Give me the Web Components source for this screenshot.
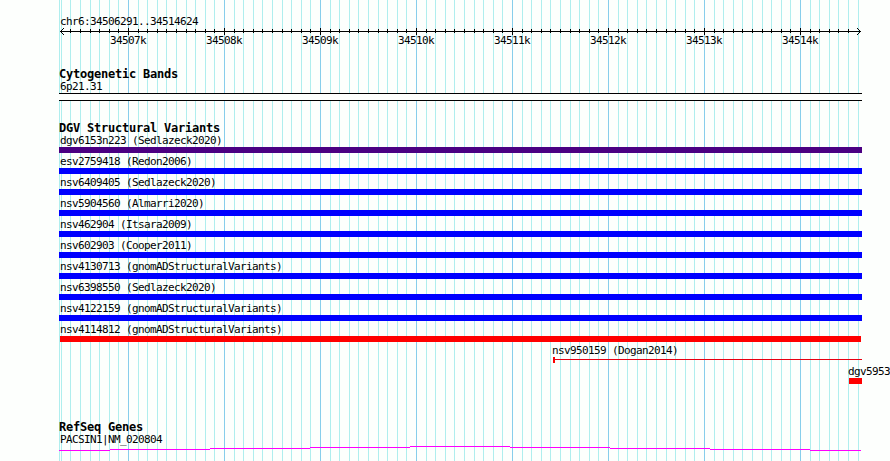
<!DOCTYPE html>
<html lang="en">
<head>
<meta charset="utf-8">
<title>chr6:34506291..34514624</title>
<style>
  html, body {
    margin: 0;
    height: 100%;
    overflow: hidden;
    background: #fdfffd;
  }
</style>
</head>
<body>
<genome-view>
  <genome-ruler region="chr6:34506291..34514624" first="34507" count="8"></genome-ruler>
  <genome-track titulo="Cytogenetic Bands">
    <track-feature label="6p21.31" kind="band"></track-feature>
  </genome-track>
  <genome-track titulo="DGV Structural Variants">
    <track-feature label="dgv6153n223 (Sedlazeck2020)" color="#4b0082"></track-feature>
    <track-feature label="esv2759418 (Redon2006)"></track-feature>
    <track-feature label="nsv6409405 (Sedlazeck2020)"></track-feature>
    <track-feature label="nsv5904560 (Almarri2020)"></track-feature>
    <track-feature label="nsv462904 (Itsara2009)"></track-feature>
    <track-feature label="nsv602903 (Cooper2011)"></track-feature>
    <track-feature label="nsv4130713 (gnomADStructuralVariants)"></track-feature>
    <track-feature label="nsv6398550 (Sedlazeck2020)"></track-feature>
    <track-feature label="nsv4122159 (gnomADStructuralVariants)"></track-feature>
    <track-feature label="nsv4114812 (gnomADStructuralVariants)" color="#ff0000" start="1" end="802"></track-feature>
    <track-feature label="nsv950159 (Dogan2014)" color="#ff0000" start="494" kind="span"></track-feature>
    <track-feature label="dgv5953" color="#ff0000" start="790"></track-feature>
  </genome-track>
  <genome-track titulo="RefSeq Genes" style="margin-top: 36px">
    <track-feature label="PACSIN1|NM_020804" kind="gene"></track-feature>
  </genome-track>
</genome-view>

<script>
const WIDTH = 803;

class GenomeView extends HTMLElement {
  constructor() {
    super();
    this.attachShadow({ mode: 'open' });
  }

  connectedCallback() {
    // 100 bp lines, with a darker one on every 1000 bp
    let lines = '<rect x="59" width="1" height="461" fill="#afeeee"/>';
    for (let i = -7; i <= 76; i++) {
      const x = Math.round(128 + i * 9.6);
      const color = i % 10 === 0 ? '#87ceeb' : '#afeeee';
      lines += `<rect x="${x}" width="1" height="461" fill="${color}"/>`;
    }

    this.shadowRoot.innerHTML = `
      <style>
        :host {
          display: grid;
          width: 890px;
          height: 461px;
          overflow: hidden;
          color: #000;
          font: 11px/13px "DejaVu Sans Mono", "Liberation Mono", monospace;
          letter-spacing: -0.622px;
        }
        svg, .tracks {
          grid-area: 1 / 1;
        }
        .tracks {
          min-width: 0;
          padding: 15px 0 0 59px;
        }
      </style>
      <svg width="890" height="461" shape-rendering="crispEdges">${lines}</svg>
      <div class="tracks"><slot></slot></div>
    `;
  }
}

class GenomeRuler extends HTMLElement {
  constructor() {
    super();
    this.attachShadow({ mode: 'open' });
  }

  connectedCallback() {
    const first = Number(this.getAttribute('first'));
    const count = Number(this.getAttribute('count'));

    let ticks = '';
    for (let i = -6; i <= 75; i++) {
      const x = Math.round(128 + i * 9.6) - 59;
      ticks += i % 10 === 0
        ? `<rect x="${x}" y="0" width="1" height="7"/>`
        : `<rect x="${x}" y="1" width="1" height="4"/>`;
    }

    let labels = '';
    for (let i = 0; i < count; i++) {
      labels += `<span>${first + i}k</span>`;
    }

    this.shadowRoot.innerHTML = `
      <style>
        :host {
          display: block;
        }
        .region {
          padding-left: 1px;
        }
        svg {
          display: block;
        }
        .labels {
          display: flex;
          gap: 60px;
          margin-top: -1px;
          padding-left: 51px;
        }
        span {
          flex: none;
          width: 36px;
          white-space: nowrap;
        }
      </style>
      <div class="region">${this.getAttribute('region')}</div>
      <svg width="${WIDTH}" height="7" shape-rendering="crispEdges">
        <rect x="1" y="3" width="801" height="1"/>
        ${ticks}
        <path d="M2 2h1v1h-1zM3 1h1v1h-1zM4 0h1v1h-1zM2 4h1v1h-1zM3 5h1v1h-1zM4 6h1v1h-1z"/>
        <path d="M800 2h1v1h-1zM799 1h1v1h-1zM798 0h1v1h-1zM800 4h1v1h-1zM799 5h1v1h-1zM798 6h1v1h-1z"/>
      </svg>
      <div class="labels">${labels}</div>
    `;
  }
}

class GenomeTrack extends HTMLElement {
  constructor() {
    super();
    this.attachShadow({ mode: 'open' });
  }

  connectedCallback() {
    this.shadowRoot.innerHTML = `
      <style>
        :host {
          display: block;
          margin-top: 20px;
        }
        .title {
          height: 13px;
          font-size: 12px;
          font-weight: 700;
          line-height: 14px;
          letter-spacing: -0.224px;
        }
        .features {
          display: flex;
          flex-direction: column;
          gap: 2px;
        }
      </style>
      <div class="title">${this.getAttribute('titulo')}</div>
      <div class="features"><slot></slot></div>
    `;
  }
}

class TrackFeature extends HTMLElement {
  constructor() {
    super();
    this.attachShadow({ mode: 'open' });
  }

  glyph(kind, width, color) {
    if (kind === 'band') {
      return `<svg width="${width}" height="8" shape-rendering="crispEdges">
        <rect width="${width}" height="8"/>
        <rect y="1" width="${width}" height="6" fill="#fdfffd"/>
      </svg>`;
    }
    if (kind === 'span') {
      return `<svg width="${width}" height="6" shape-rendering="crispEdges">
        <rect width="2" height="6" fill="${color}"/>
        <rect y="2" width="${width}" height="1" fill="#e60012"/>
      </svg>`;
    }
    if (kind === 'gene') {
      return `<svg width="${width}" height="5" shape-rendering="crispEdges">
        <path fill="#ff00ff" d="M0 4h51v1h-51zM51 3h100v1h-100zM151 2h100v1h-100zM251 1h100v1h-100zM351 0h100v1h-100zM451 1h100v1h-100zM551 2h100v1h-100zM651 3h100v1h-100zM751 4h51v1h-51z"/>
      </svg>`;
    }
    return `<svg width="${width}" height="6" shape-rendering="crispEdges">
      <rect width="${width}" height="6" fill="${color}"/>
    </svg>`;
  }

  connectedCallback() {
    const start = Number(this.getAttribute('start') || 0);
    const end = Number(this.getAttribute('end') || WIDTH);
    const color = this.getAttribute('color') || '#0000ff';
    const kind = this.getAttribute('kind') || 'bar';
    // labels sit one pixel in from the left edge of the panel
    const indent = start > 1 ? start - 1 : 1;

    this.shadowRoot.innerHTML = `
      <style>
        :host {
          display: block;
        }
        .label {
          height: 13px;
          padding-left: ${indent}px;
          white-space: nowrap;
        }
        svg {
          display: block;
          margin-left: ${start}px;
        }
      </style>
      <div class="label">${this.getAttribute('label')}</div>
      ${this.glyph(kind, end - start, color)}
    `;
  }
}

customElements.define('genome-view', GenomeView);
customElements.define('genome-ruler', GenomeRuler);
customElements.define('genome-track', GenomeTrack);
customElements.define('track-feature', TrackFeature);
</script>
</body>
</html>
